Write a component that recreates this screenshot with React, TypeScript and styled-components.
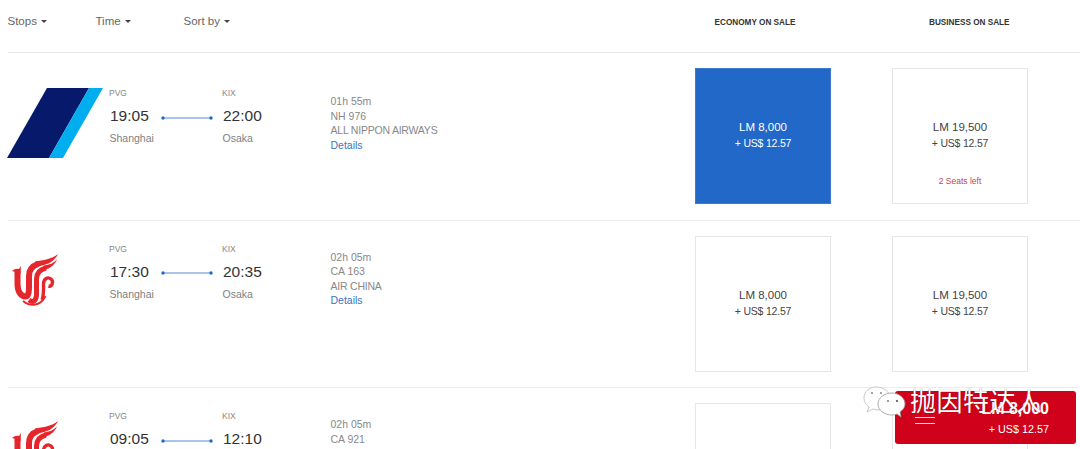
import React from "react";
import styled, { createGlobalStyle } from "styled-components";

const Global = createGlobalStyle`
  html, body { margin: 0; padding: 0; background: #fff; height: 449px; overflow: hidden; }
  body { font-family: "Liberation Sans", Arial, sans-serif; color: #333; }
  #root { position: relative; height: 449px; overflow: hidden; }
`;

const Page = styled.div`
  padding-left: 8px;
  width: 1072px;
`;

const Header = styled.header`
  display: flex;
  height: 52px;
  border-bottom: 1px solid #e9e9e9;
  align-items: flex-start;
`;

const Filters = styled.div`
  display: flex;
  flex: none;
  width: 687px;
  padding-top: 14px;
`;

const Filter = styled.div`
  width: 88px;
  font-size: 11.5px;
  line-height: 14px;
  color: #666;
  display: flex;
  align-items: center;
  margin-left: -0.5px;
  margin-right: 0.5px;
`;

const Caret = styled.span`
  width: 0;
  height: 0;
  margin-left: 4px;
  margin-top: 1px;
  border-left: 3.5px solid transparent;
  border-right: 3.5px solid transparent;
  border-top: 3.5px solid #444;
`;

const CabinHead = styled.div<{ $w: number; $pad?: number }>`
  flex: none;
  box-sizing: border-box;
  width: ${(p) => p.$w}px;
  padding-top: 17px;
  padding-left: ${(p) => p.$pad ?? 0}px;
  font-size: 8.2px;
  line-height: 11px;
  font-weight: 700;
  color: #333;
  text-align: ${(p) => (p.$pad ? "left" : "center")};
  white-space: nowrap;
`;

const Row = styled.section`
  display: flex;
  height: 166.6px;
  border-bottom: 1px solid #ededed;
  align-items: flex-start;
`;

const LogoCell = styled.div<{ $top: number; $left: number }>`
  width: 101px;
  padding-top: ${(p) => p.$top}px;
  padding-left: ${(p) => p.$left}px;
  box-sizing: border-box;
`;

const Leg = styled.div<{ $w: number; $top: number }>`
  width: ${(p) => p.$w}px;
  padding-top: ${(p) => p.$top}px;
  box-sizing: border-box;
`;

const Code = styled.div`
  font-size: 8.5px;
  line-height: 11px;
  color: #888;
`;

const TimeLine = styled.div`
  display: flex;
  align-items: center;
  height: 26px;
  margin-top: 4px;
`;

const Clock = styled.div<{ $w?: number }>`
  font-size: 15.5px;
  line-height: 20px;
  color: #333;
  margin-left: 1px;
  width: ${(p) => (p.$w ? `${p.$w - 1}px` : "auto")};
`;

const Connector = styled.svg`
  width: 52px;
  height: 6px;
  display: block;
  margin-top: 3px;
`;

const City = styled.div`
  font-size: 10.5px;
  line-height: 14px;
  color: #808080;
  margin-top: 2px;
  margin-left: 0.5px;
`;

const Meta = styled.div<{ $top: number }>`
  width: 365px;
  padding: ${(p) => p.$top}px 0 0 0.5px;
  box-sizing: border-box;
  font-size: 10.5px;
  line-height: 14.6px;
  color: #888;
`;

const Carrier = styled.div`
  letter-spacing: -0.22px;
`;

const DetailsLink = styled.a`
  color: #3f73c4;
  display: block;
`;

const Fares = styled.div`
  display: flex;
  gap: 61px;
  padding-top: 15px;
`;

const Fare = styled.div<{ $selected?: boolean }>`
  position: relative;
  width: 136px;
  height: 136px;
  box-sizing: border-box;
  border: 1px solid ${(p) => (p.$selected ? "#3f78cc" : "#e6e6e6")};
  background: ${(p) => (p.$selected ? "#2268c8" : "#fff")};
  color: ${(p) => (p.$selected ? "#fff" : "#444")};
  display: flex;
  flex-direction: column;
  align-items: center;
  padding-top: 51px;
`;

const Points = styled.div`
  font-size: 11.5px;
  line-height: 14px;
`;

const Cash = styled.div`
  font-size: 10.5px;
  line-height: 14px;
  margin-top: 2px;
  letter-spacing: -0.2px;
`;

const Seats = styled.div`
  font-size: 8.5px;
  line-height: 12px;
  color: #c2454d;
  margin-top: 25px;
`;

const StickyFare = styled.div`
  position: absolute;
  left: 895px;
  top: 391px;
  width: 181px;
  height: 53px;
  box-sizing: border-box;
  background: #d0021b;
  border-radius: 3px;
  color: #fff;
  text-align: right;
  padding: 9px 27px 0 0;
`;

const StickyPoints = styled.div`
  font-size: 16px;
  font-weight: 700;
  line-height: 17px;
`;

const StickyCash = styled.div`
  font-size: 10.8px;
  line-height: 14px;
  margin-top: 5px;
`;

const Watermark = styled.div`
  position: absolute;
  left: 862px;
  top: 384px;
  display: flex;
  align-items: flex-start;
  gap: 4px;
  pointer-events: none;
`;

const WechatIcon = styled.svg`
  width: 44px;
  height: 36px;
  display: block;
`;

const WatermarkText = styled.div`
  font-family: "Noto Sans CJK SC", sans-serif;
  font-weight: 400;
  font-size: 26px;
  line-height: 32px;
  letter-spacing: 0.5px;
  color: #fff;
  text-shadow: 0 0 1px rgba(0, 0, 0, 0.45);
`;

const WatermarkRule = styled.div`
  position: absolute;
  left: 53px;
  top: 33px;
  width: 20px;
  height: 5px;
  border-top: 1px solid rgba(255, 255, 255, 0.85);
  border-bottom: 1px solid rgba(255, 255, 255, 0.85);
`;

const LogoSvg = styled.svg`
  display: block;
`;

const ShiftedLogo = styled(LogoSvg)`
  margin-left: -1px;
`;

const AnaLogo = () => (
  <ShiftedLogo width="97" height="70" viewBox="0 0 97 70">
    <polygon points="40,0 82,0 42,70 0,70" fill="#06196b" />
    <polygon points="82,0 96,0 56,70 42,70" fill="#00aeef" />
  </ShiftedLogo>
);

const AirChinaLogo = () => (
  <LogoSvg width="46" height="52" viewBox="0 0 46 52" fill="none" stroke="#e5262c" strokeLinecap="butt">
    <path d="M0 17 C2 15.5 4.5 14.5 7 15 L9 12 L8.5 20 L2.5 20 L3.5 18 Z" fill="#e5262c" stroke="none" />
    <path d="M5.5 17 L5.5 30 C5.5 39 10 42.5 13.5 42.5 C16 42.5 17 39 17 34 L17 22 C17 16 20 12 26 10" strokeWidth="6" />
    <path d="M23 7.5 C31 6.5 40 5 46 0 C43 6 38 9.5 32 11 C28 12 24 13 22 15 Z" fill="#e5262c" stroke="none" />
    <path d="M17 46 C21 49 24 47 24.5 41 L24.5 25 C24.5 19 28 15.5 34 14" strokeWidth="5" />
    <path d="M32 11.5 C37 11 42 9 45 5.5 C43 10 39 14 34 15.5 L30 17 Z" fill="#e5262c" stroke="none" />
    <path d="M30 46 C32 41 31.5 35 31.5 30 C31.5 24.5 36 22.5 39 25 C42 27.5 40 33 36.5 32" strokeWidth="3.4" />
    <path d="M11 47 C17 52 25 52 30 47 C31.5 45.5 32.5 44 33.5 42" strokeWidth="1.8" />
  </LogoSvg>
);

type Flight = {
  dep: string;
  arr: string;
  dur: string;
  no: string;
  carrier: string;
  logo: "ana" | "ca";
  first?: boolean;
  seats?: string;
  selected?: boolean;
  eco: string;
};

const flights: Flight[] = [
  { dep: "19:05", arr: "22:00", dur: "01h 55m", no: "NH 976", carrier: "ALL NIPPON AIRWAYS", logo: "ana", first: true, seats: "2 Seats left", selected: true, eco: "LM 8,000" },
  { dep: "17:30", arr: "20:35", dur: "02h 05m", no: "CA 163", carrier: "AIR CHINA", logo: "ca", eco: "LM 8,000" },
  { dep: "09:05", arr: "12:10", dur: "02h 05m", no: "CA 921", carrier: "AIR CHINA", logo: "ca", eco: "LM 8,000" },
];

export default function App() {
  return (
    <>
      <Global />
      <Page>
        <Header>
          <Filters>
            {["Stops", "Time", "Sort by"].map((f) => (
              <Filter key={f}>
                {f}
                <Caret />
              </Filter>
            ))}
          </Filters>
          <CabinHead $w={120}>ECONOMY ON SALE</CabinHead>
          <CabinHead $w={265} $pad={114}>BUSINESS ON SALE</CabinHead>
        </Header>
        {flights.map((f) => {
          const top = f.first ? 35 : 23;
          return (
            <Row key={f.no}>
              <LogoCell $top={f.logo === "ana" ? 35 : 33} $left={f.logo === "ana" ? 0 : 4}>
                {f.logo === "ana" ? <AnaLogo /> : <AirChinaLogo />}
              </LogoCell>
              <Leg $w={113} $top={top}>
                <Code>PVG</Code>
                <TimeLine>
                  <Clock $w={52}>{f.dep}</Clock>
                  <Connector viewBox="0 0 52 6">
                    <line x1="2" y1="3" x2="50" y2="3" stroke="#5b8bd0" strokeWidth="1" />
                    <circle cx="2" cy="3" r="1.7" fill="#2268c8" />
                    <circle cx="50" cy="3" r="1.7" fill="#2268c8" />
                  </Connector>
                </TimeLine>
                <City>Shanghai</City>
              </Leg>
              <Leg $w={108} $top={top}>
                <Code>KIX</Code>
                <TimeLine>
                  <Clock>{f.arr}</Clock>
                </TimeLine>
                <City>Osaka</City>
              </Leg>
              <Meta $top={top + 6}>
                <div>{f.dur}</div>
                <div>{f.no}</div>
                <Carrier>{f.carrier}</Carrier>
                <DetailsLink>Details</DetailsLink>
              </Meta>
              <Fares>
                <Fare $selected={f.selected}>
                  <Points>{f.eco}</Points>
                  <Cash>+ US$ 12.57</Cash>
                </Fare>
                <Fare>
                  <Points>LM 19,500</Points>
                  <Cash>+ US$ 12.57</Cash>
                  {f.seats && <Seats>{f.seats}</Seats>}
                </Fare>
              </Fares>
            </Row>
          );
        })}
      </Page>
      <StickyFare>
        <StickyPoints>LM 8,000</StickyPoints>
        <StickyCash>+ US$ 12.57</StickyCash>
      </StickyFare>
      <Watermark>
        <WechatIcon viewBox="0 0 44 36">
          <path d="M14 3 C7 3 2 8 2 14 C2 18 4 21 7 23 L5 28 L11 25 C13 25.6 15 26 17 26 C24 26 28 20 28 14 C28 8 22 3 14 3 Z" fill="#fff" stroke="#bbb" strokeWidth="0.8" />
          <path d="M30 9 C22 9 16 14 16 20 C16 26 22 31 30 31 C32 31 33 30.7 35 30 L39 33 L38 28 C41 26 43 23 43 20 C43 14 37 9 30 9 Z" fill="#fff" stroke="#999" strokeWidth="0.8" />
          <circle cx="10" cy="9" r="1" fill="#888" />
          <circle cx="19" cy="9" r="1" fill="#888" />
          <circle cx="26" cy="17" r="1.1" fill="#888" />
          <circle cx="35" cy="17" r="1.1" fill="#555" />
        </WechatIcon>
        <WatermarkText>抛因特达人</WatermarkText>
        <WatermarkRule />
      </Watermark>
    </>
  );
}
